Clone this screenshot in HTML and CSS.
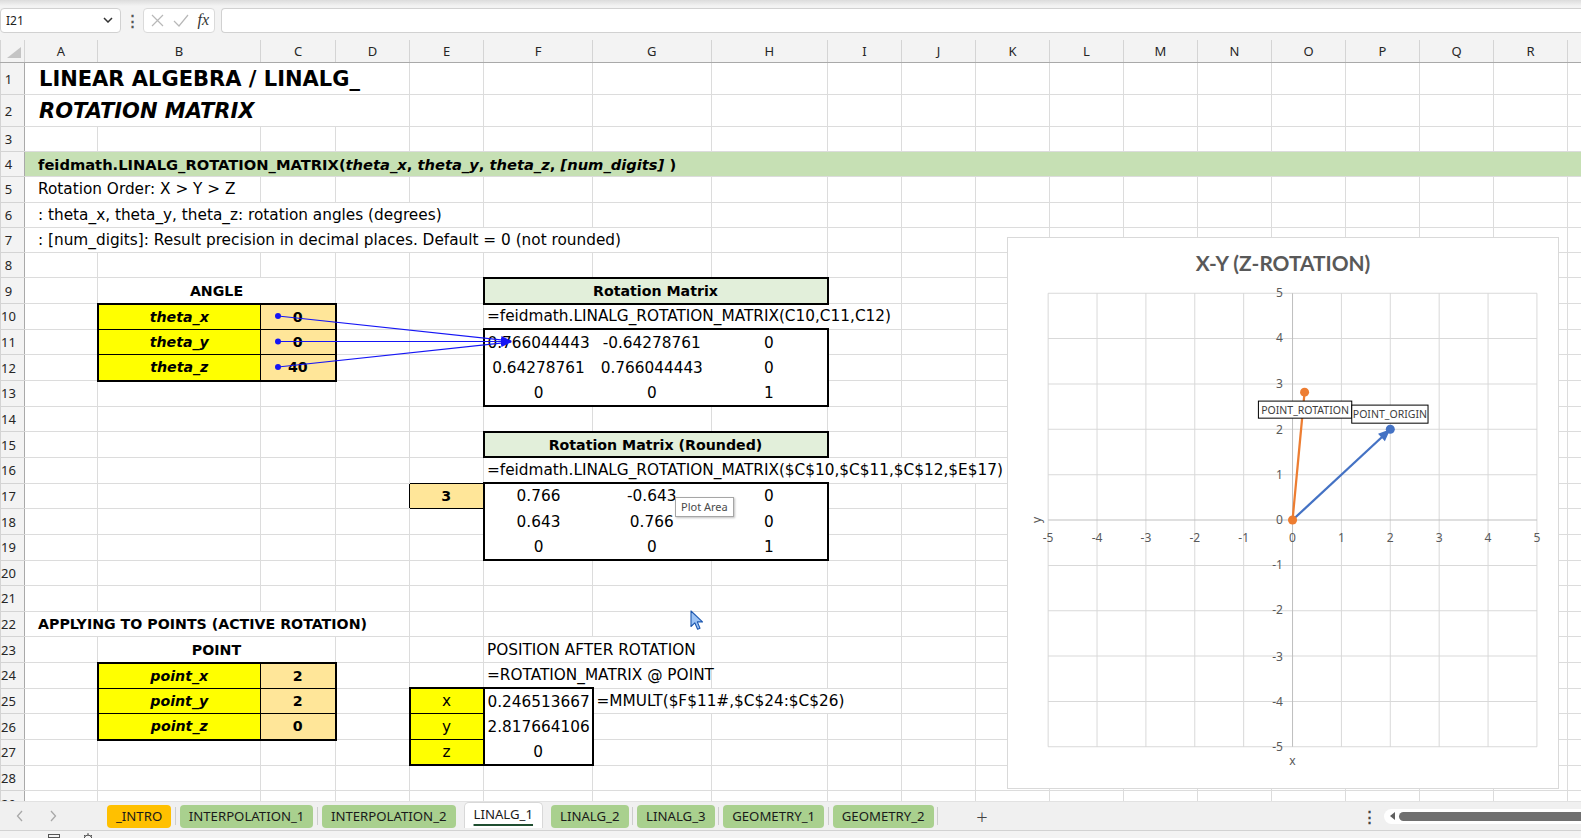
FILE: index.html
```html
<!DOCTYPE html>
<html lang="en">
<head>
    <meta charset="UTF-8">
    <meta name="viewport" content="width=device-width, initial-scale=1.0">
    <title>LINALG_1</title>
    <link rel="stylesheet" href="styles.css">
</head>
<body>
    <div class="formula-bar">
        <div class="name-box">
            <span>I21</span>
            <svg width="10" height="6" viewBox="0 0 10 6"><path d="M1 1l4 4 4-4" fill="none" stroke="#333" stroke-width="1.5"/></svg>
        </div>
        <div class="fb-dots">&#8942;</div>
        <div class="fx-box">
            <svg width="13" height="13" viewBox="0 0 13 13"><path d="M1 1l11 11M12 1L1 12" stroke="#b8b8b8" stroke-width="1.2"/></svg>
            <svg width="16" height="13" viewBox="0 0 16 13"><path d="M1 7l5 5L15 1" fill="none" stroke="#b8b8b8" stroke-width="1.2"/></svg>
            <span class="fx">fx</span>
        </div>
        <div class="formula-input"></div>
    </div>

    <div class="sheet-wrap">
        <table class="sheet">
            <colgroup>
                <col class="c-rh"><col class="c-a"><col class="c-b"><col class="c-c"><col><col><col class="c-f"><col class="c-g"><col class="c-h"><col><col><col><col><col><col><col><col><col><col><col>
            </colgroup>
            <tr class="hdr">
                <th class="corner"><svg width="24" height="22" viewBox="0 0 24 22"><path d="M6 18H20V7z" fill="#c4c4c4"/></svg></th>
                <th>A</th><th>B</th><th>C</th><th>D</th><th>E</th><th>F</th><th>G</th><th>H</th><th>I</th><th>J</th><th>K</th><th>L</th><th>M</th><th>N</th><th>O</th><th>P</th><th>Q</th><th>R</th><th>S</th>
            </tr>
            <tr class="tall">
                <th class="rh">1</th><td colspan="4" class="title">LINEAR ALGEBRA / LINALG_</td>
                <td></td><td></td><td></td><td></td><td></td><td></td><td></td><td></td><td></td><td></td><td></td><td></td><td></td><td></td><td></td>
            </tr>
            <tr class="tall">
                <th class="rh">2</th><td colspan="4" class="title em">ROTATION MATRIX</td>
                <td></td><td></td><td></td><td></td><td></td><td></td><td></td><td></td><td></td><td></td><td></td><td></td><td></td><td></td><td></td>
            </tr>
            <tr class="short">
                <th class="rh">3</th>
                <td></td><td></td><td></td><td></td><td></td><td></td><td></td><td></td><td></td><td></td><td></td><td></td><td></td><td></td><td></td><td></td><td></td><td></td><td></td>
            </tr>
            <tr class="low">
                <th class="rh">4</th>
                <td colspan="19" class="band ind">feidmath.LINALG_ROTATION_MATRIX(<i>theta_x</i>, <i>theta_y</i>, <i>theta_z</i>, <i>[num_digits]</i> )</td>
            </tr>
            <tr class="low">
                <th class="rh">5</th><td colspan="2" class="ind">Rotation Order: X &gt; Y &gt; Z</td>
                <td></td><td></td><td></td><td></td><td></td><td></td><td></td><td></td><td></td><td></td><td></td><td></td><td></td><td></td><td></td><td></td><td></td>
            </tr>
            <tr class="low">
                <th class="rh">6</th><td colspan="5" class="ind">: theta_x, theta_y, theta_z: rotation angles (degrees)</td>
                <td></td><td></td><td></td><td></td><td></td><td></td><td></td><td></td><td></td><td></td><td></td><td></td><td></td><td></td>
            </tr>
            <tr class="low">
                <th class="rh">7</th><td colspan="7" class="ind">: [num_digits]: Result precision in decimal places. Default = 0 (not rounded)</td>
                <td></td><td></td><td></td><td></td><td></td><td></td><td></td><td></td><td></td><td></td><td></td><td></td>
            </tr>
            <tr class="low">
                <th class="rh">8</th>
                <td></td><td></td><td></td><td></td><td></td><td></td><td></td><td></td><td></td><td></td><td></td><td></td><td></td><td></td><td></td><td></td><td></td><td></td><td></td>
            </tr>
            <tr>
                <th class="rh">9</th><td></td><td colspan="2" class="bold c">ANGLE</td><td></td><td></td>
                <td colspan="3" class="hd bt bb bl br">Rotation Matrix</td>
                <td></td><td></td><td></td><td></td><td></td><td></td><td></td><td></td><td></td><td></td><td></td>
            </tr>
            <tr>
                <th class="rh">10</th><td></td>
                <td class="yel bold em c k bt bl">theta_x</td><td class="org bold c k bt br">0</td><td></td><td></td>
                <td colspan="4">=feidmath.LINALG_ROTATION_MATRIX(C10,C11,C12)</td>
                <td></td><td></td><td></td><td></td><td></td><td></td><td></td><td></td><td></td><td></td>
            </tr>
            <tr>
                <th class="rh">11</th><td></td>
                <td class="yel bold em c k bl">theta_y</td><td class="org bold c k br">0</td><td></td><td></td>
                <td class="c bt bl nr nb">0.766044443</td><td class="c bt nr nb">-0.64278761</td><td class="c bt br nb">0</td>
                <td></td><td></td><td></td><td></td><td></td><td></td><td></td><td></td><td></td><td></td><td></td>
            </tr>
            <tr>
                <th class="rh">12</th><td></td>
                <td class="yel bold em c k bl bb">theta_z</td><td class="org bold c k br bb">40</td><td></td><td></td>
                <td class="c bl nr nb">0.64278761</td><td class="c nr nb">0.766044443</td><td class="c br nb">0</td>
                <td></td><td></td><td></td><td></td><td></td><td></td><td></td><td></td><td></td><td></td><td></td>
            </tr>
            <tr>
                <th class="rh">13</th><td></td><td></td><td></td><td></td><td></td>
                <td class="c bl bb nr">0</td><td class="c bb nr">0</td><td class="c bb br">1</td>
                <td></td><td></td><td></td><td></td><td></td><td></td><td></td><td></td><td></td><td></td><td></td>
            </tr>
            <tr>
                <th class="rh">14</th>
                <td></td><td></td><td></td><td></td><td></td><td></td><td></td><td></td><td></td><td></td><td></td><td></td><td></td><td></td><td></td><td></td><td></td><td></td><td></td>
            </tr>
            <tr>
                <th class="rh">15</th><td></td><td></td><td></td><td></td><td></td>
                <td colspan="3" class="hd bt bb bl br">Rotation Matrix (Rounded)</td>
                <td></td><td></td><td></td><td></td><td></td><td></td><td></td><td></td><td></td><td></td><td></td>
            </tr>
            <tr>
                <th class="rh">16</th><td></td><td></td><td></td><td></td><td class="kb"></td>
                <td colspan="6">=feidmath.LINALG_ROTATION_MATRIX($C$10,$C$11,$C$12,$E$17)</td>
                <td></td><td></td><td></td><td></td><td></td><td></td><td></td><td></td>
            </tr>
            <tr>
                <th class="rh">17</th><td></td><td></td><td></td><td class="kr"></td>
                <td class="org bold c k">3</td>
                <td class="c bt bl nr nb">0.766</td><td class="c bt nr nb">-0.643</td><td class="c bt br nb">0</td>
                <td></td><td></td><td></td><td></td><td></td><td></td><td></td><td></td><td></td><td></td><td></td>
            </tr>
            <tr>
                <th class="rh">18</th><td></td><td></td><td></td><td></td><td></td>
                <td class="c bl nr nb">0.643</td><td class="c nr nb">0.766</td><td class="c br nb">0</td>
                <td></td><td></td><td></td><td></td><td></td><td></td><td></td><td></td><td></td><td></td><td></td>
            </tr>
            <tr>
                <th class="rh">19</th><td></td><td></td><td></td><td></td><td></td>
                <td class="c bl bb nr">0</td><td class="c bb nr">0</td><td class="c bb br">1</td>
                <td></td><td></td><td></td><td></td><td></td><td></td><td></td><td></td><td></td><td></td><td></td>
            </tr>
            <tr>
                <th class="rh">20</th>
                <td></td><td></td><td></td><td></td><td></td><td></td><td></td><td></td><td></td><td></td><td></td><td></td><td></td><td></td><td></td><td></td><td></td><td></td><td></td>
            </tr>
            <tr>
                <th class="rh">21</th>
                <td></td><td></td><td></td><td></td><td></td><td></td><td></td><td></td><td></td><td></td><td></td><td></td><td></td><td></td><td></td><td></td><td></td><td></td><td></td>
            </tr>
            <tr>
                <th class="rh">22</th><td colspan="4" class="ind bold">APPLYING TO POINTS (ACTIVE ROTATION)</td>
                <td></td><td></td><td></td><td></td><td></td><td></td><td></td><td></td><td></td><td></td><td></td><td></td><td></td><td></td><td></td>
            </tr>
            <tr>
                <th class="rh">23</th><td></td><td colspan="2" class="bold c">POINT</td><td></td><td></td>
                <td colspan="2">POSITION AFTER ROTATION</td>
                <td></td><td></td><td></td><td></td><td></td><td></td><td></td><td></td><td></td><td></td><td></td><td></td>
            </tr>
            <tr>
                <th class="rh">24</th><td></td>
                <td class="yel bold em c k bt bl">point_x</td><td class="org bold c k bt br">2</td><td></td><td></td>
                <td colspan="2">=ROTATION_MATRIX @ POINT</td>
                <td></td><td></td><td></td><td></td><td></td><td></td><td></td><td></td><td></td><td></td><td></td><td></td>
            </tr>
            <tr>
                <th class="rh">25</th><td></td>
                <td class="yel bold em c k bl">point_y</td><td class="org bold c k br">2</td><td></td>
                <td class="yel c k bt bl br">x</td><td class="c bt br nb">0.246513667</td>
                <td colspan="3">=MMULT($F$11#,$C$24:$C$26)</td>
                <td></td><td></td><td></td><td></td><td></td><td></td><td></td><td></td><td></td><td></td>
            </tr>
            <tr>
                <th class="rh">26</th><td></td>
                <td class="yel bold em c k bl bb">point_z</td><td class="org bold c k br bb">0</td><td></td>
                <td class="yel c k bl br">y</td><td class="c br nb">2.817664106</td>
                <td></td><td></td><td></td><td></td><td></td><td></td><td></td><td></td><td></td><td></td><td></td><td></td><td></td>
            </tr>
            <tr>
                <th class="rh">27</th><td></td><td></td><td></td><td></td>
                <td class="yel c k bl br bb">z</td><td class="c br bb">0</td>
                <td></td><td></td><td></td><td></td><td></td><td></td><td></td><td></td><td></td><td></td><td></td><td></td><td></td>
            </tr>
            <tr>
                <th class="rh">28</th>
                <td></td><td></td><td></td><td></td><td></td><td></td><td></td><td></td><td></td><td></td><td></td><td></td><td></td><td></td><td></td><td></td><td></td><td></td><td></td>
            </tr>
            <tr>
                <th class="rh">29</th>
                <td></td><td></td><td></td><td></td><td></td><td></td><td></td><td></td><td></td><td></td><td></td><td></td><td></td><td></td><td></td><td></td><td></td><td></td><td></td>
            </tr>
        </table>

        <!-- trace precedents arrows -->
        <svg class="trace" width="530" height="350" viewBox="0 0 530 350">
            <defs>
                <marker id="head" markerWidth="11" markerHeight="8" refX="10" refY="4" orient="auto" markerUnits="userSpaceOnUse">
                    <path d="M0 0L11 4L0 8z" fill="#1515f5"/>
                </marker>
            </defs>
            <g stroke="#1515f5" stroke-width="1.2" fill="none" marker-end="url(#head)">
                <path d="M278 276L511 301"/>
                <path d="M278 301.5L511 301.5"/>
                <path d="M278 327L511 302"/>
            </g>
            <g fill="#1515f5">
                <circle cx="278" cy="276" r="3"/>
                <circle cx="278" cy="301.5" r="3"/>
                <circle cx="278" cy="327" r="3"/>
            </g>
        </svg>

        <div class="tooltip">Plot Area</div>

        <svg class="cursor" width="14" height="21" viewBox="0 0 14 21">
            <path d="M1 1V16.5L4.8 12.8L7.6 19.2L10 18.2L7.3 11.9H12.5Z" fill="#9cc3f5" stroke="#1d58b0" stroke-width="1.1" stroke-linejoin="round"/>
        </svg>

        <div class="chart">
            <svg width="550" height="550" viewBox="0 0 548 548">
                <text class="ch-title" x="274" y="33" text-anchor="middle">X-Y (Z-ROTATION)</text>
                <path class="ch-grid" d="M40 55H527M40 100.2H527M40 145.4H527M40 190.6H527M40 235.8H527M40 326.2H527M40 371.4H527M40 416.6H527M40 461.8H527M40 507H527M40 55V507M88.7 55V507M137.4 55V507M186.1 55V507M234.8 55V507M332.2 55V507M380.9 55V507M429.6 55V507M478.3 55V507M527 55V507"/>
                <path class="ch-axis" d="M40 281H527M283.5 55V507"/>
                <g class="ch-tick" text-anchor="end">
                    <text x="274" y="59">5</text>
                    <text x="274" y="104">4</text>
                    <text x="274" y="149">3</text>
                    <text x="274" y="195">2</text>
                    <text x="274" y="240">1</text>
                    <text x="274" y="285">0</text>
                    <text x="274" y="330">-1</text>
                    <text x="274" y="375">-2</text>
                    <text x="274" y="421">-3</text>
                    <text x="274" y="466">-4</text>
                    <text x="274" y="511">-5</text>
                </g>
                <g class="ch-tick" text-anchor="middle">
                    <text x="40" y="303">-5</text>
                    <text x="88.7" y="303">-4</text>
                    <text x="137.4" y="303">-3</text>
                    <text x="186.1" y="303">-2</text>
                    <text x="234.8" y="303">-1</text>
                    <text x="283.5" y="303">0</text>
                    <text x="332.2" y="303">1</text>
                    <text x="380.9" y="303">2</text>
                    <text x="429.6" y="303">3</text>
                    <text x="478.3" y="303">4</text>
                    <text x="527" y="303">5</text>
                    <text x="283.5" y="525">x</text>
                    <text transform="translate(33 281) rotate(-90)">y</text>
                </g>
                <!-- POINT_ORIGIN -->
                <path d="M283.5 281L374 197" stroke="#4472c4" stroke-width="2.25"/>
                <path d="M380.9 190.6L375.5 202.5L368.7 195.1Z" fill="#4472c4"/>
                <circle cx="380.9" cy="190.6" r="4.5" fill="#4472c4"/>
                <!-- POINT_ROTATION -->
                <path d="M283.5 281L295.5 153.6" stroke="#ed7d31" stroke-width="2.25"/>
                <circle cx="283.5" cy="281" r="4.5" fill="#ed7d31"/>
                <circle cx="295.5" cy="153.6" r="4.5" fill="#ed7d31"/>
                <g class="ch-label">
                    <rect x="249.5" y="162.5" width="93" height="17"/>
                    <text x="296" y="175" text-anchor="middle">POINT_ROTATION</text>
                    <rect x="342.5" y="166.5" width="76" height="18"/>
                    <text x="380.5" y="179.5" text-anchor="middle">POINT_ORIGIN</text>
                </g>
            </svg>
        </div>
    </div>

    <div class="tab-bar">
        <div class="tab-nav">
            <svg width="8" height="12" viewBox="0 0 8 12"><path d="M6 1L1.5 6 6 11" fill="none" stroke="#a8a8a8" stroke-width="1.3"/></svg>
            <svg width="8" height="12" viewBox="0 0 8 12"><path d="M2 1l4.5 5L2 11" fill="none" stroke="#a8a8a8" stroke-width="1.3"/></svg>
        </div>
        <div class="tabs">
            <span class="tab tab-intro">_INTRO</span>
            <span class="tab-sep"></span>
            <span class="tab">INTERPOLATION_1</span>
            <span class="tab-sep"></span>
            <span class="tab">INTERPOLATION_2</span>
            <span class="tab-gap"></span>
            <span class="tab tab-active"><span>LINALG_1</span></span>
            <span class="tab-gap"></span>
            <span class="tab">LINALG_2</span>
            <span class="tab-sep"></span>
            <span class="tab">LINALG_3</span>
            <span class="tab-sep"></span>
            <span class="tab">GEOMETRY_1</span>
            <span class="tab-sep"></span>
            <span class="tab">GEOMETRY_2</span>
            <span class="tab-sep"></span>
        </div>
        <span class="add-sheet">+</span>
        <div class="tab-tools">
            <span class="tab-more">&#8942;</span>
            <div class="hscroll">
                <span class="hscroll-arrow"></span>
                <span class="hscroll-thumb"></span>
            </div>
        </div>
    </div>

    <div class="status-bar">
        <svg width="14" height="8" viewBox="0 0 14 8"><rect x="1.5" y="2.5" width="11" height="9" fill="none" stroke="#555"/><path d="M1.5 5.5H12.5" stroke="#555"/></svg>
        <svg width="14" height="8" viewBox="0 0 14 8"><circle cx="7" cy="7" r="4" fill="none" stroke="#555"/><path d="M7 1v3M3 3l1.5 1.5M11 3L9.5 4.5" stroke="#555"/></svg>
    </div>
</body>
</html>
```

FILE: styles.css
```css
* {
    box-sizing: border-box;
}
html {
    height: 838px;
    overflow: hidden;
}
body {
    margin: 0;
    width: 1581px;
    height: 838px;
    overflow: hidden;
    background: #fff;
    font-family: "Noto Sans", "Open Sans", sans-serif;
    color: #000;
}

/* formula bar */
.formula-bar {
    height: 40px;
    display: flex;
    align-items: center;
    background: linear-gradient(#dcdcdc, #f3f3f3 6px);
}
.name-box {
    width: 121px;
    height: 25px;
    display: flex;
    align-items: center;
    justify-content: space-between;
    padding: 0 7px 0 5px;
    background: #fff;
    border: 1px solid #d1d1d1;
    border-radius: 4px;
    font-size: 12px;
    color: #222;
}
.fb-dots {
    width: 22px;
    text-align: center;
    font-size: 15px;
    font-weight: bold;
    color: #555;
}
.fx-box {
    width: 72px;
    height: 25px;
    display: flex;
    align-items: center;
    justify-content: space-between;
    padding: 0 5px 0 7px;
    background: #fff;
    border: 1px solid #dadada;
    border-radius: 4px;
}
.fx {
    font-family: "Liberation Serif", serif;
    font-style: italic;
    font-size: 16px;
    color: #333;
}
.formula-input {
    flex: 1;
    height: 25px;
    margin-left: 6px;
    background: #fff;
    border: 1px solid #d1d1d1;
    border-right: none;
    border-radius: 4px 0 0 4px;
}

/* sheet grid */
.sheet-wrap {
    position: relative;
    height: 761px;
    overflow: hidden;
}
.sheet {
    width: 1641px;
    table-layout: fixed;
    border-collapse: collapse;
    font-family: "DejaVu Sans", Verdana, sans-serif;
    font-size: 15.3px;
}
.sheet col {
    width: 74px;
}
.sheet col.c-rh { width: 24px; }
.sheet col.c-a { width: 73px; }
.sheet col.c-b { width: 163px; }
.sheet col.c-c { width: 75px; }
.sheet col.c-f { width: 109px; }
.sheet col.c-g { width: 118.5px; }
.sheet col.c-h { width: 116.5px; }

.sheet tr {
    height: 25.65px;
}
.sheet tr.hdr { height: 22px; }
.sheet tr.tall { height: 32px; }
.sheet tr.short { height: 25px; }
.sheet tr.low { height: 25.3px; }

.sheet th {
    padding: 0;
    background: #f3f3f3;
    border: 1px solid #d4d4d4;
    font-family: "Noto Sans", sans-serif;
    font-size: 13px;
    font-weight: normal;
    color: #262626;
}
.sheet .hdr th {
    border-top: 0;
    border-bottom-color: #a9a9a9;
}
.sheet th.corner {
    line-height: 0;
}
.sheet th.rh {
    padding-right: 8px;
    border-right-color: #a9a9a9;
}
.sheet td {
    padding: 0 3px;
    border: 1px solid #dcdcdc;
    white-space: nowrap;
}

.sheet td.ind { padding-left: 13px; }
.sheet td.title {
    padding-left: 14px;
    font-size: 21px;
    font-weight: bold;
}
.band {
    background: #c6e0b4;
    font-weight: bold;
    font-size: 14.7px;
}
.bold {
    font-weight: bold;
    font-size: 14.2px;
}
.em { font-style: italic; }
.c { text-align: center; }
.yel { background: #ffff00; }
.org { background: #ffe699; }
.hd {
    background: #e2efda;
    font-weight: bold;
    font-size: 14.2px;
    text-align: center;
}

/* cell borders */
.sheet td.k { border: 1px solid #000; }
.sheet td.kb { border-bottom-color: #000; }
.sheet td.kr { border-right-color: #000; }
.sheet td.bt { border-top: 2px solid #000; }
.sheet td.bb { border-bottom: 2px solid #000; }
.sheet td.bl { border-left: 2px solid #000; }
.sheet td.br { border-right: 2px solid #000; }
.sheet td.nr { border-right-style: hidden; }
.sheet td.nb { border-bottom-style: hidden; }

/* overlays */
.trace {
    position: absolute;
    left: 0;
    top: 0;
}
.tooltip {
    position: absolute;
    left: 675px;
    top: 457px;
    padding: 1px 5px 2px;
    background: #fff;
    border: 1px solid #a6a6a6;
    box-shadow: 1px 1px 2px rgba(0, 0, 0, 0.25);
    font-size: 11px;
    color: #4a4a4a;
}
.cursor {
    position: absolute;
    left: 690px;
    top: 570px;
}

/* chart */
.chart {
    position: absolute;
    left: 1007px;
    top: 197px;
    width: 552px;
    height: 552px;
    background: #fff;
    border: 1px solid #d9d9d9;
}
.chart svg {
    display: block;
}
.ch-title {
    font: bold 20.8px Lato, sans-serif;
    fill: #595959;
}
.ch-grid {
    fill: none;
    stroke: #d9d9d9;
}
.ch-axis {
    stroke: #bfbfbf;
}
.ch-tick {
    font: 12px "Noto Sans", sans-serif;
    fill: #595959;
}
.ch-label rect {
    fill: #fff;
    stroke: #000;
}
.ch-label text {
    font: 10.5px "Noto Sans", sans-serif;
    fill: #404040;
}

/* sheet tabs */
.tab-bar {
    height: 29px;
    display: flex;
    align-items: center;
    background: #f0f0f0;
    border-top: 1px solid #e2e2e2;
}
.tab-nav {
    width: 107px;
    display: flex;
    align-items: center;
    gap: 25px;
    padding-left: 16px;
}
.tabs {
    display: flex;
    align-items: center;
}
.tab {
    height: 23px;
    line-height: 23px;
    padding: 0 9px;
    border-radius: 4px;
    background: #a9d08e;
    font-size: 13.2px;
    color: #1a1a1a;
}
.tab-intro {
    background: #ffc000;
}
.tab-active {
    height: 26px;
    margin-top: -2px;
    background: #fff;
    border: 1px solid #d8d8d8;
    border-bottom: none;
    border-radius: 5px 5px 0 0;
}
.tab-active span {
    text-decoration: underline 2px #1f4e30;
    text-underline-offset: 5px;
}
.tab-sep {
    width: 1px;
    height: 18px;
    margin: 0 3.8px;
    background: #cdcdcd;
}
.tab-gap {
    width: 8px;
}
.add-sheet {
    margin-left: 34px;
    font-size: 20px;
    font-weight: 300;
    color: #444;
}
.tab-tools {
    margin-left: auto;
    display: flex;
    align-items: center;
}
.tab-more {
    width: 22px;
    font-size: 15px;
    font-weight: bold;
    color: #444;
}
.hscroll {
    width: 197px;
    height: 15px;
    display: flex;
    align-items: center;
    padding-left: 6px;
    background: #fff;
    border-radius: 8px 0 0 8px;
}
.hscroll-arrow {
    width: 0;
    height: 0;
    border-top: 4px solid transparent;
    border-bottom: 4px solid transparent;
    border-right: 5px solid #5e5e5e;
}
.hscroll-thumb {
    flex: 1;
    height: 9px;
    margin-left: 4px;
    background: #6f6f6f;
    border-radius: 5px 0 0 5px;
}

.status-bar {
    height: 8px;
    display: flex;
    gap: 20px;
    padding: 1px 0 0 47px;
    overflow: hidden;
    background: #f3f3f3;
    border-top: 1px solid #d2d2d2;
}
```
